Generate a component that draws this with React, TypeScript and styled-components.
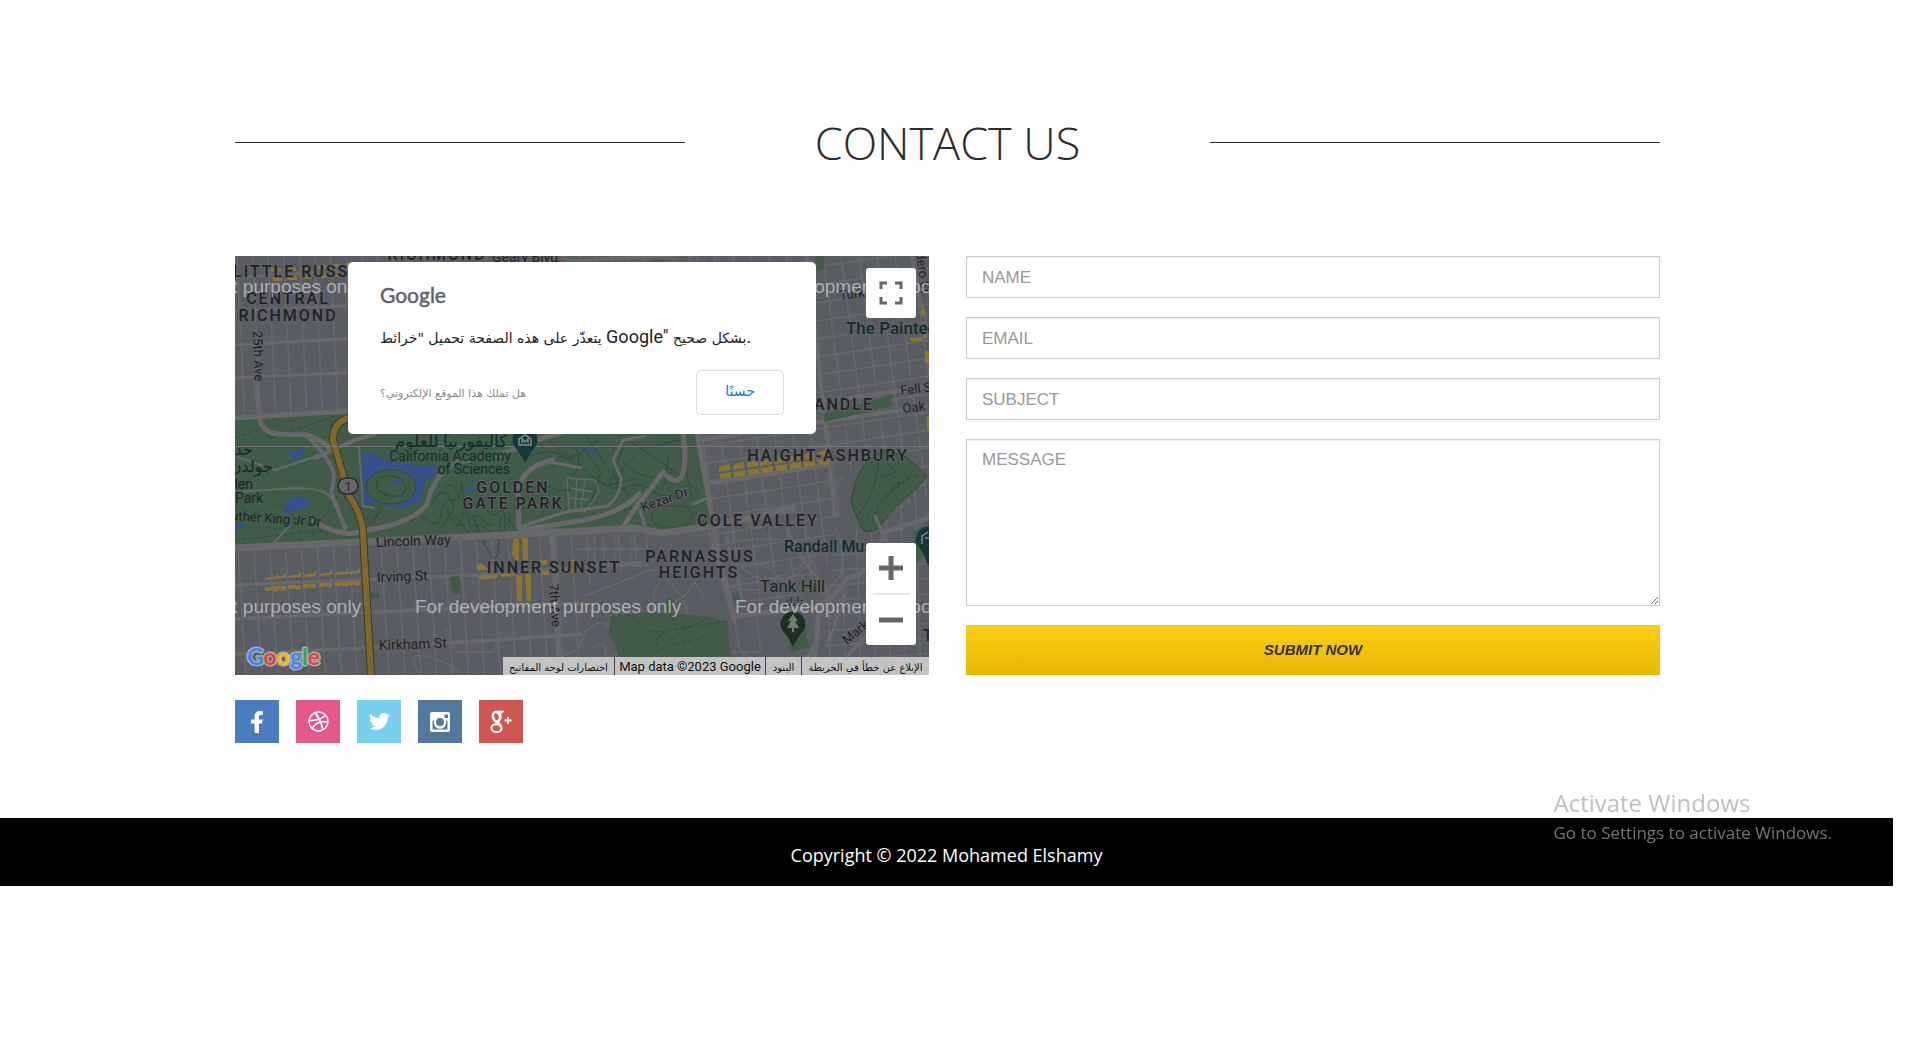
import React from "react";
import styled, { createGlobalStyle } from "styled-components";
import { FaDribbble, FaFacebookF, FaTwitter } from "react-icons/fa";

const GlobalStyle = createGlobalStyle`
  *, *::before, *::after { box-sizing: border-box; }
  html { background: #fefefe; }
  body { margin: 0; color: #2b2b2b; font-family: "Open Sans", sans-serif; }
`;

const Page = styled.div`
  padding-right: 19px;
`;

const Container = styled.main`
  max-width: 1425px;
  margin: 0 auto;
  padding: 112px 0 75px;
`;

const Heading = styled.header`
  display: grid;
  grid-template-columns: 6fr 7fr 6fr;
  align-items: center;
  margin-bottom: 83px;
`;

const Rule = styled.span`
  height: 1px;
  background: #2b2b2b;
`;

const Title = styled.h1`
  margin: 0;
  text-align: center;
  font-size: 45px;
  font-weight: 300;
  line-height: 61px;
`;

const Columns = styled.div`
  display: grid;
  grid-template-columns: 1fr 1fr;
  gap: 37px;
`;

/* ---------- map ---------- */

const MapFrame = styled.section`
  position: relative;
  height: 419px;
  overflow: hidden;
  background: #5a5c63;
`;

const MapDrawing = styled.svg`
  display: block;
  width: 100%;
  height: 100%;
`;

const Dialog = styled.div`
  position: absolute;
  top: 6px;
  left: 50%;
  width: 468px;
  margin-left: -234px;
  height: 172px;
  padding: 15px 32px 0;
  border-radius: 5px;
  background: #fff;
  color: #212121;
`;

const DialogLogo = styled.div`
  font: 400 21px/36px Lato, sans-serif;
  color: #5f6368;
  -webkit-text-stroke: 0.5px #5f6368;
`;

const DialogMessage = styled.p`
  margin: 8px 0 16px;
  font: 400 18px/32px Roboto, "DejaVu Sans", sans-serif;
  white-space: nowrap;
`;

const Arabic = styled.span<{ $size: number }>`
  font-family: "DejaVu Sans", sans-serif;
  font-weight: 400;
  font-size: ${(p) => p.$size}px;
`;

const DialogActions = styled.div`
  display: flex;
  align-items: center;
  justify-content: space-between;
`;

const OwnerLink = styled.a`
  color: #8a8a8a;
  text-decoration: none;
  line-height: 20px;
`;

const OkButton = styled.button`
  width: 88px;
  height: 45px;
  padding: 0 0 4px;
  border: 1px solid #dadce0;
  border-radius: 5px;
  background: #fff;
  color: #1a73e8;
`;

const MapControls = styled.div<{ $edge: "top" | "bottom" }>`
  position: absolute;
  right: 13px;
  ${(p) => (p.$edge === "top" ? "top: 12px;" : "bottom: 30px;")}
  display: flex;
  flex-direction: column;
  align-items: center;
  width: 50px;
  border-radius: 3px;
  background: #fff;
`;

const MapButton = styled.button`
  display: flex;
  align-items: center;
  justify-content: center;
  width: 50px;
  height: 50px;
  padding: 0;
  border: 0;
  background: none;
`;

const Divider = styled.span`
  width: 37px;
  height: 2px;
  background: #e6e6e6;
`;

const MapLogo = styled.svg`
  position: absolute;
  left: 8px;
  bottom: 0;
`;

const Attribution = styled.div`
  position: absolute;
  right: 0;
  bottom: 0;
  display: flex;
  height: 18px;
  background: #c3c3c4;
  color: #111;
  font: 400 13px/19px Roboto, sans-serif;
`;

const Credit = styled.span<{ $width: number }>`
  width: ${(p) => p.$width}px;
  overflow: hidden;
  text-align: center;
  white-space: nowrap;
  & + & { border-left: 1px solid #444; }
`;

/* ---------- form ---------- */

const Form = styled.form`
  display: flex;
  flex-direction: column;
  gap: 19px;
`;

const fieldStyle = `
  display: block;
  width: 100%;
  border: 1px solid #ccc;
  border-radius: 0;
  background: #fff;
  box-shadow: inset 0 1px 1px rgba(0, 0, 0, 0.075);
  color: #555;
  font: 17px/24px "Liberation Sans", Arial, sans-serif;
  &::placeholder { color: #999; opacity: 1; }
`;

const Field = styled.input`
  ${fieldStyle}
  height: 42px;
  padding: 1px 15px 0;
`;

const Message = styled.textarea`
  ${fieldStyle}
  height: 167px;
  padding: 8px 15px;
  resize: vertical;
`;

const Submit = styled.button`
  height: 50px;
  border: 0;
  background: linear-gradient(#facd15, #e5ba04);
  color: #333;
  font: italic 700 15px/20px "Liberation Sans", Arial, sans-serif;
`;

/* ---------- social + footer ---------- */

const Social = styled.nav`
  display: flex;
  gap: 17px;
  margin-top: 25px;
`;

const SocialLink = styled.a<{ $color: string }>`
  display: flex;
  align-items: center;
  justify-content: center;
  width: 44px;
  height: 43px;
  background: ${(p) => p.$color};
  color: #fff;
`;

const Footer = styled.footer`
  margin-right: 2px;
  padding: 25px 0 19px;
  background: #000;
  color: #fff;
  text-align: center;
  font-size: 18px;
  line-height: 24px;
`;

const Watermark = styled.aside`
  position: fixed;
  right: 82px;
  bottom: 196px;
  color: rgba(150, 150, 150, 0.6);
  font-family: "Open Sans", sans-serif;
  pointer-events: none;
`;

const WatermarkTitle = styled.div`
  font-size: 24px;
  line-height: 34px;
`;

const WatermarkText = styled.div`
  color: #757575;
  font-size: 17px;
  line-height: 26px;
`;

/* ---------- map artwork ---------- */

const range = (n: number) => Array.from({ length: n }, (_, i) => i);

const ROAD = "#68686a";
const PARK = "#405c49";
const WATER = "#35508a";
const SHOP = "#8a7534";
const TRAIL = "#314a3a";

type LabelProps = {
  x: number;
  y: number;
  size?: number;
  color?: string;
  weight?: number;
  track?: number;
  rotate?: number;
  anchor?: "start" | "middle" | "end";
  halo?: string;
  children: string;
};

function Label({
  x, y, size = 14, color = "#232325", weight = 400, track = 0, rotate = 0, anchor = "start", halo = "#5f6166", children,
}: LabelProps) {
  return (
    <text
      x={x}
      y={y}
      fontFamily='Roboto, "DejaVu Sans", sans-serif'
      fontSize={size}
      fontWeight={weight}
      letterSpacing={track}
      textAnchor={anchor}
      transform={rotate ? `rotate(${rotate} ${x} ${y})` : undefined}
      fill={color}
      stroke={halo}
      strokeWidth={2}
      strokeLinejoin="round"
      paintOrder="stroke"
    >
      {children}
    </text>
  );
}

function District({ x, y, anchor = "middle", children }: { x: number; y: number; anchor?: "start" | "middle" | "end"; children: string }) {
  return (
    <Label x={x} y={y} size={16} weight={500} track={2} anchor={anchor}>
      {children}
    </Label>
  );
}

function MapArt() {
  return (
    <MapDrawing viewBox="0 0 694 419" preserveAspectRatio="xMidYMid slice" role="img" aria-label="Map of San Francisco">
      <defs>
        <clipPath id="richmond"><path d="M0 0H470L463 150L0 166Z" /></clipPath>
        <clipPath id="sunset"><path d="M0 292L350 276L413 278L410 306L350 330L345 419H0Z" /></clipPath>
        <clipPath id="haight"><path d="M455 0H694V240L640 262L610 200L600 300L560 345H500L478 270L464 180Z" /></clipPath>
        <clipPath id="castro"><path d="M600 285L694 225V419H585Z" /></clipPath>
      </defs>
      <rect width="694" height="419" fill="#5a5c64" />

      <g stroke={ROAD} strokeWidth="1.6" fill="none">
        <g clipPath="url(#richmond)">
          {range(32).map((i) => <path key={i} d={`M${2 + i * 15.6} 0l8 170`} />)}
          <path strokeWidth="3" d="M0 21L470 -2M0 55L470 32M0 89L470 62M0 122L470 100" />
        </g>
        <g clipPath="url(#sunset)">
          {range(26).map((i) => <path key={i} d={`M${2 + i * 15.9} 275l9 145`} />)}
          <path strokeWidth="3.5" d="M0 329L240 319L415 306M0 363L223 352L350 347M0 398L150 391L350 378" />
        </g>
        <g clipPath="url(#haight)">
          {range(16).map((i) => <path key={i} d={`M${444 + i * 18} 0l46 350`} />)}
          {range(20).map((i) => <path key={i} d={`M455 ${30 + i * 18}l240 -36`} />)}
          <path strokeWidth="4" d="M572 0L600 260M464 184L694 150M466 165L694 130M472 228L600 208" />
        </g>
        <g clipPath="url(#castro)">
          {range(9).map((i) => <path key={i} d={`M${590 + i * 15} 230l6 190`} />)}
          {range(9).map((i) => <path key={i} d={`M590 ${300 + i * 15}l110 -8`} />)}
        </g>
      </g>

      {/* hillside streets */}
      <g stroke={ROAD} strokeWidth="1.4" fill="none">
        <path d="M350 340L415 314L450 312M360 279V310H412V278M380 278V310M396 278V310M340 293H410" />
        <path d="M422 328q-8 22 0 40t16 -18q6 -12 12 -2t-6 24M350 376q20 -20 30 4t-18 28M430 320l18 22 12 -16 10 18" />
        <path d="M358 392q16 -10 12 8t-14 10M185 419q-14 -22 4 -19t32 14 18 5M210 372l12 24h36l8 -20M330 400l14 -8 8 -20" />
        <path d="M500 304q20 26 46 16t38 -30M486 326q26 14 52 4t40 -26M500 354q0 30 8 44l20 10M520 352l6 44h-28M548 340l18 30" />
        <path d="M474 276L498 363M490 276L506 340M552 270Q560 300 590 330L600 360" strokeWidth="2.6" />
        <path d="M482 290q50 -16 110 4M484 316q40 -20 60 6M600 270q14 30 4 52l-20 20" />
      </g>

      {/* Golden Gate Park */}
      <path d="M0 163L116 156L300 150L463 178L477 271L440 276L413 273L350 274L0 290Z" fill={PARK} />
      <path d="M588 158L657 139L656 150L590 166ZM580 0H589V12L582 15ZM416 4h12v4h-12Z" fill={PARK} />
      <path d="M616 247C620 220 628 203 650 194L670 200L692 219C682 236 662 246 650 264C642 276 634 278 627 273Z" fill={PARK} stroke={TRAIL} />
      <path d="M376 361L420 356L440 358L470 360L492 366L496 401H384L374 376Z" fill={PARK} />
      <path d="M433 341l6 4 -2 14 -8 -3ZM496 341l7 -2 1 5 -8 1ZM553 355l12 -2 10 38 -20 6ZM214 321l10 -2 2 19 -8 0ZM134 337h10v5h-10ZM678 276l16 -8v22l-12 18ZM530 272l5 -3 -3 7Z" fill={PARK} />

      <g fill={WATER}>
        <path d="M124 198l14 -2 10 8 20 4 34 2 -4 10 -8 6 -6 20 -16 6 -28 -5 -14 2 2 -22Z" />
        <path d="M48 254q8 -18 22 -12t-8 12q-8 4 -14 3ZM52 196l8 0 8 -6 3 4 -6 6 -2 6 -6 -4ZM0 269l8 -2 4 3 -12 4ZM345 190l18 5 -1 4 -14 -5ZM229 235l10 -6 -2 6 -6 3Z" />
      </g>
      <ellipse cx="156" cy="231" rx="25" ry="17" fill={PARK} stroke={TRAIL} />
      <ellipse cx="156" cy="230" rx="15" ry="10" fill="none" stroke={TRAIL} transform="rotate(12 156 230)" />
      <ellipse cx="162" cy="225" rx="5" ry="2" fill={WATER} />

      {/* trails */}
      <g fill="none" stroke={TRAIL} strokeWidth="1">
        <path strokeDasharray="4 3" d="M0 182L20 174L44 160M36 182L100 160M0 247Q20 264 30 252T60 262T102 240M0 284L90 274M60 262q-14 14 -24 10M64 284l26 -10 30 10" />
        <path d="M134 267Q150 254 140 260M138 268L146 250M160 274q-4 -8 8 -8t12 -6 12 4 14 -6 10 -14 10 -12 2 18 -12 12 12 8 14 2 6 12 16 -2 16 -8" />
        <path d="M198 246q8 -16 16 -6t2 18 -10 14M208 232q10 -8 14 4t10 10M230 250q12 -10 20 2t14 4 6 12 -14 8 -20 -4ZM236 262q8 -6 12 2t10 4" />
        <path d="M272 268q10 -20 24 -16M296 200q20 -10 34 2l16 -4M300 222q24 20 42 8M346 212l26 18 30 -8M310 180l24 24 30 -20M340 190q10 22 -8 36M388 190l-10 30 20 24M402 198l-26 26M396 186l50 34M382 236q20 -14 34 -2t28 0M388 206q24 24 50 10M350 178l20 30" />
        <path d="M420 190l24 -6M434 198l-4 30 14 18M448 204l10 40M375 222h8v10h-8ZM444 232q14 -8 20 6M350 194l16 22 -10 30M320 206l10 -10 10 12" />
        <rect x="417" y="250" width="40" height="21" rx="10" />
        <path strokeDasharray="4 3" d="M340 266l60 -14M376 361q20 -6 28 6t28 8M424 397q-10 -20 18 -24t52 -8M426 394q20 -24 46 -30M440 388l34 -8M632 262q20 -30 52 -44M450 270l10 -14" />
        <path d="M622 262q20 -30 22 -56M636 266q12 -28 40 -46M650 204l10 12 -14 6M656 232l8 -6v6Z" />
      </g>
      <g fill="none" stroke="#64686a" strokeWidth="1.3">
        <path d="M332 222l28 2 4 12 -14 20 -16 -2ZM336 232l22 4M335 242l20 2M342 222l-2 32M350 224l-4 32" />
        <path d="M0 236L60 232Q90 232 96 242L112 272M0 200L40 214L76 202L116 186M124 190L128 250L140 252M36 290L56 268" strokeWidth="2.2" />
      </g>

      {/* park drives */}
      <g fill="none" stroke={ROAD} strokeLinecap="round">
        <path strokeWidth="5" d="M24 160Q26 176 42 178L72 179Q90 184 106 204" />
        <path strokeWidth="4" d="M70 178Q90 196 98 214Q100 224 96 236L110 272M80 202L120 184L140 178" />
        <path strokeWidth="5" d="M78 265Q104 280 120 277L134 274Q180 266 192 248Q200 216 222 206L262 200L308 182L340 172" />
        <path strokeWidth="5" d="M284 272L283 232Q290 210 318 204M286 274L350 264Q388 256 404 238M388 272Q396 256 410 240L428 216Q450 240 450 196L448 178" />
        <path strokeWidth="3" d="M288 270L330 256L372 250Q386 240 386 222L378 204L388 184L410 180M405 254l6 20M458 248l20 -8M316 206L346 212" />
        <path strokeWidth="7" strokeLinecap="butt" d="M0 292L350 275L398 272L428 277L478 270L560 252" />
        <path strokeWidth="5" strokeLinecap="butt" d="M0 162L116 155L460 176M462 176L482 290L500 365M316 272L322 350L324 419M20 120L25 162" />
        <path strokeWidth="5" d="M580 390Q560 419 580 400L584 350Q598 344 612 322Q634 318 640 300L650 276L694 262M500 360L580 352" />
        <path strokeWidth="3" d="M676 0L694 80M610 340l-18 50M594 419L650 360M640 260L654 290" />
      </g>

      {/* Crossover Drive / highway 1 */}
      <g fill="none" strokeLinejoin="round">
        <path d="M114 162Q98 166 98 184L114 240Q127 258 128 276L136 419" stroke="#45391d" strokeWidth="8" />
        <path d="M114 162Q98 166 98 184L114 240Q127 258 128 276L136 419" stroke="#7f672f" strokeWidth="6" />
      </g>

      {/* commercial blocks */}
      <g fill={SHOP}>
        {[30, 38, 53, 68, 84, 100, 112].map((x, i) => (
          <g key={x}>
            <path d={`M${x} ${323 - i}l4 -2 6 0 3 -4v6l-13 1Z`} />
            <path d={`M${x} ${331 - i}h13v4l-5 1v-2l-4 1h-4Z`} />
          </g>
        ))}
        <path d="M278 283l6 -1v22h-4l-3 -6ZM287 282h6v24h-5ZM281 319h6v26h-5ZM290 318h6v27l-4 0ZM242 310l4 -3 6 4h12v3h-22ZM242 320l20 -2v4l-16 2ZM306 304h6v5h-6ZM334 305l8 -2v6h-8ZM306 315h8v4h-8ZM330 313l18 -3v4l-18 4ZM266 318l14 -1v3l-14 1Z" />
        {range(8).map((i) => (
          <g key={i}>
            <path d={`M${484 + i * 14} ${211 - i * 2}l11 -4v7l-11 2Z`} />
            <path d={`M${484 + i * 14} ${218 - i * 2}l12 -2v6l-10 1Z`} />
          </g>
        ))}
        {range(7).map((i) => (
          <g key={i}>
            <path d={`M${36 + i * 15} ${12 - i}h10v4h-10Z`} />
            <path d={`M${36 + i * 15} ${21 - i}h11v4h-8Z`} />
          </g>
        ))}
        <path d="M146 6h5v6h-5ZM675 82l12 -1v4h-12ZM688 72h4v10h-4ZM690 95h4v12h-4ZM686 54h4v5h-4ZM692 160h2v14h-2Z" />
      </g>
      <path d="M318 4h13v2h-13Z" fill="#8b4642" />
      <path d="M0 190.500H694" stroke="#77787a" strokeWidth="1" />

      {/* labels */}
      <District x={202} y={4}>RICHMOND</District>
      <Label x={257} y={6}>Geary Blvd</Label>
      <District x={-2} y={21} anchor="start">LITTLE RUSSIA</District>
      <District x={53} y={48}>CENTRAL</District>
      <District x={53} y={65}>RICHMOND</District>
      <Label x={18} y={75} size={13} rotate={88}>25th Ave</Label>
      <g>
        <Label x={216} y={191} size={17} color="#152c2e" anchor="middle" halo={PARK}>كاليفورنيا للعلوم</Label>
        <Label x={215} y={205} size={14} color="#152c2e" anchor="middle" halo={PARK}>California Academy</Label>
        <Label x={275} y={218} size={14} color="#152c2e" anchor="end" halo={PARK}>of Sciences</Label>
        <Label x={18} y={199} size={16} anchor="end" halo={PARK}>حديقة</Label>
        <Label x={38} y={216} size={16} anchor="end" halo={PARK}>جولدن</Label>
        <Label x={18} y={233} anchor="end" halo={PARK}>Golden</Label>
        <Label x={0} y={247} halo={PARK}>Park</Label>
        <Label x={-4} y={264} size={13} rotate={4} halo={PARK}>uther King Jr Dr</Label>
      </g>
      <District x={278} y={237}>GOLDEN</District>
      <District x={278} y={253}>GATE PARK</District>
      <Label x={141} y={291} rotate={-2}>Lincoln Way</Label>
      <Label x={142} y={326} rotate={-2}>Irving St</Label>
      <Label x={144} y={394} rotate={-2}>Kirkham St</Label>
      <District x={319} y={317}>INNER SUNSET</District>
      <Label x={314} y={328} size={13} rotate={86}>7th Ave</Label>
      <District x={465} y={306}>PARNASSUS</District>
      <District x={464} y={322}>HEIGHTS</District>
      <District x={523} y={270}>COLE VALLEY</District>
      <Label x={408} y={256} size={13} rotate={-20}>Kezar Dr</Label>
      <District x={593} y={205}>HAIGHT-ASHBURY</District>
      <District x={639} y={154} anchor="end">PANHANDLE</District>
      <Label x={666} y={139} size={13} rotate={-7}>Fell St</Label>
      <Label x={668} y={157} size={13} rotate={-7}>Oak St</Label>
      <Label x={605} y={44} size={13} rotate={-7}>Turk St</Label>
      <Label x={680} y={-10} size={13} rotate={82}>adero St</Label>
      <Label x={611} y={78} size={17} weight={500} color="#122d2e">The Painted Ladies</Label>
      <Label x={549} y={296} size={16} weight={500} color="#122d2e">Randall Museum</Label>
      <Label x={525} y={336} size={17} color="#1a2b1f">Tank Hill</Label>
      <Label x={558} y={350} size={12} color="#1a2b1f" anchor="middle">تانك</Label>
      <Label x={612} y={389} size={13} rotate={-40}>Market St</Label>
      <District x={688} y={385} anchor="start">TWIN</District>

      {/* markers */}
      <path d="M290 207Q284 196 279 190A12.500 12.500 0 1 1 301 190Q296 196 290 207Z" fill="#17383b" />
      <path d="M284 189v-6l6 -4 6 4v6ZM287 187v-4l3 3 3 -3v4" fill="none" stroke="#7d8c8d" strokeWidth="1.500" />
      <path d="M558 391Q553 380 547 374A12.500 12.500 0 1 1 569 374Q563 380 558 391Z" fill="#1d3123" />
      <path d="M558 358l-5 7h3l-4 7h5v4h2v-4h5l-4 -7h3Z" fill="#6f7d73" />
      <path d="M693 310Q689 296 683 290A12.500 12.500 0 1 1 704 290Z" fill="#17383b" />
      <path d="M687 288v-8l6 -4M690 282h4" fill="none" stroke="#7d8c8d" strokeWidth="1.500" />
      <rect x="103" y="222" width="20" height="16" rx="8" fill="#666769" stroke="#27282a" strokeWidth="1.500" />
      <Label x={113} y={235} size={12} anchor="middle" halo="none">1</Label>

      {/* repeated development notice */}
      <g fill="#fff" fillOpacity="0.500" fontFamily='"Liberation Sans", Arial, sans-serif' fontSize="19">
        {[37, 357].flatMap((y) =>
          [-140, 180, 500].map((x) => (
            <text key={`${x}-${y}`} x={x} y={y}>For development purposes only</text>
          )),
        )}
      </g>
    </MapDrawing>
  );
}

function MapPanel() {
  return (
    <MapFrame aria-label="Map">
      <MapArt />
      <MapLogo width="90" height="38" aria-label="Google" role="img">
        <text x="4" y="28" fontFamily="Lato, sans-serif" fontSize="23" fontWeight="700" stroke="#a9abae" strokeWidth="3" strokeLinejoin="round" paintOrder="stroke">
          <tspan fill="#4285f4">G</tspan>
          <tspan fill="#ea4335">o</tspan>
          <tspan fill="#fbbc05">o</tspan>
          <tspan fill="#4285f4">g</tspan>
          <tspan fill="#34a853">l</tspan>
          <tspan fill="#ea4335">e</tspan>
        </text>
      </MapLogo>
      <MapControls $edge="top">
        <MapButton type="button" aria-label="Toggle fullscreen view">
          <svg width="24" height="24" fill="none" stroke="#666" strokeWidth="3">
            <path d="M2 8V2H8M16 2H22V8M22 16V22H16M8 22H2V16" />
          </svg>
        </MapButton>
      </MapControls>
      <MapControls $edge="bottom">
        <MapButton type="button" aria-label="Zoom in">
          <svg width="24" height="24" stroke="#666" strokeWidth="5"><path d="M0 12H24M12 0V24" /></svg>
        </MapButton>
        <Divider />
        <MapButton type="button" aria-label="Zoom out">
          <svg width="24" height="24" stroke="#666" strokeWidth="5"><path d="M0 12H24" /></svg>
        </MapButton>
      </MapControls>
      <Attribution>
        <Credit $width={111}><Arabic $size={10}>اختصارات لوحة المفاتيح</Arabic></Credit>
        <Credit $width={151}>Map data ©2023 Google</Credit>
        <Credit $width={36}><Arabic $size={10}>البنود</Arabic></Credit>
        <Credit $width={128}><Arabic $size={10}>الإبلاغ عن خطأ في الخريطة</Arabic></Credit>
      </Attribution>
      <Dialog role="dialog" aria-label="Google">
        <DialogLogo>Google</DialogLogo>
        <DialogMessage>
          <Arabic $size={14}>يتعذّر على هذه الصفحة تحميل "خرائط</Arabic> Google"{" "}
          <Arabic $size={14}>بشكل صحيح</Arabic>.
        </DialogMessage>
        <DialogActions>
          <OwnerLink href="#owner"><Arabic $size={11}>هل تملك هذا الموقع الإلكتروني؟</Arabic></OwnerLink>
          <OkButton type="button"><Arabic $size={14}>حسنًا</Arabic></OkButton>
        </DialogActions>
      </Dialog>
    </MapFrame>
  );
}

function InstagramIcon() {
  return (
    <svg width="22" height="22" viewBox="0 0 22 22">
      <path
        fill="#fff"
        fillRule="evenodd"
        d="M3 1H19Q21 1 21 3V19Q21 21 19 21H3Q1 21 1 19V3Q1 1 3 1ZM15.500 3.500V7H19V3.500ZM3.500 9.500V18.500H18.500V9.500H17A6.300 6.300 0 1 1 5 9.500ZM11 7A4 4 0 1 0 11 15A4 4 0 1 0 11 7Z"
      />
    </svg>
  );
}

function GooglePlusIcon() {
  return (
    <svg width="22" height="24" viewBox="0 0 22 24" fill="none" stroke="#fff">
      <ellipse cx="6.500" cy="6.800" rx="3.500" ry="4.900" strokeWidth="2.600" transform="rotate(-14 6.500 6.800)" />
      <path d="M6 1.200H14L11.500 3H8" fill="#fff" strokeWidth="1" />
      <path d="M9.500 3Q12 6.500 9 9.800Q7 11.500 8.500 13" strokeWidth="2.200" />
      <ellipse cx="6.500" cy="18.200" rx="5.100" ry="3.900" strokeWidth="2" transform="rotate(8 6.500 18.200)" />
      <path d="M7.500 12.500L11.200 16.500" strokeWidth="2.800" />
      <path d="M14.500 10.500H21.500M18 7V14" strokeWidth="1.800" />
    </svg>
  );
}

const networks = [
  { name: "Facebook", color: "#4a7dbd", icon: <FaFacebookF size={22} /> },
  { name: "Dribbble", color: "#e5588c", icon: <FaDribbble size={21} /> },
  { name: "Twitter", color: "#78d0ee", icon: <FaTwitter size={21} /> },
  { name: "Instagram", color: "#51789f", icon: <InstagramIcon /> },
  { name: "Google Plus", color: "#cf5652", icon: <GooglePlusIcon /> },
];

export default function App() {
  return (
    <Page>
      <GlobalStyle />
      <Container>
        <Heading>
          <Rule />
          <Title>CONTACT US</Title>
          <Rule />
        </Heading>
        <Columns>
          <MapPanel />
          <Form onSubmit={(e) => e.preventDefault()}>
            <Field type="text" name="name" aria-label="Name" placeholder="NAME" />
            <Field type="email" name="email" aria-label="Email" placeholder="EMAIL" />
            <Field type="text" name="subject" aria-label="Subject" placeholder="SUBJECT" />
            <Message name="message" aria-label="Message" placeholder="MESSAGE" />
            <Submit type="submit">SUBMIT NOW</Submit>
          </Form>
        </Columns>
        <Social aria-label="Social networks">
          {networks.map((n) => (
            <SocialLink key={n.name} href="#" aria-label={n.name} $color={n.color}>
              {n.icon}
            </SocialLink>
          ))}
        </Social>
      </Container>
      <Footer>Copyright © 2022 Mohamed Elshamy</Footer>
      <Watermark>
        <WatermarkTitle>Activate Windows</WatermarkTitle>
        <WatermarkText>Go to Settings to activate Windows.</WatermarkText>
      </Watermark>
    </Page>
  );
}
